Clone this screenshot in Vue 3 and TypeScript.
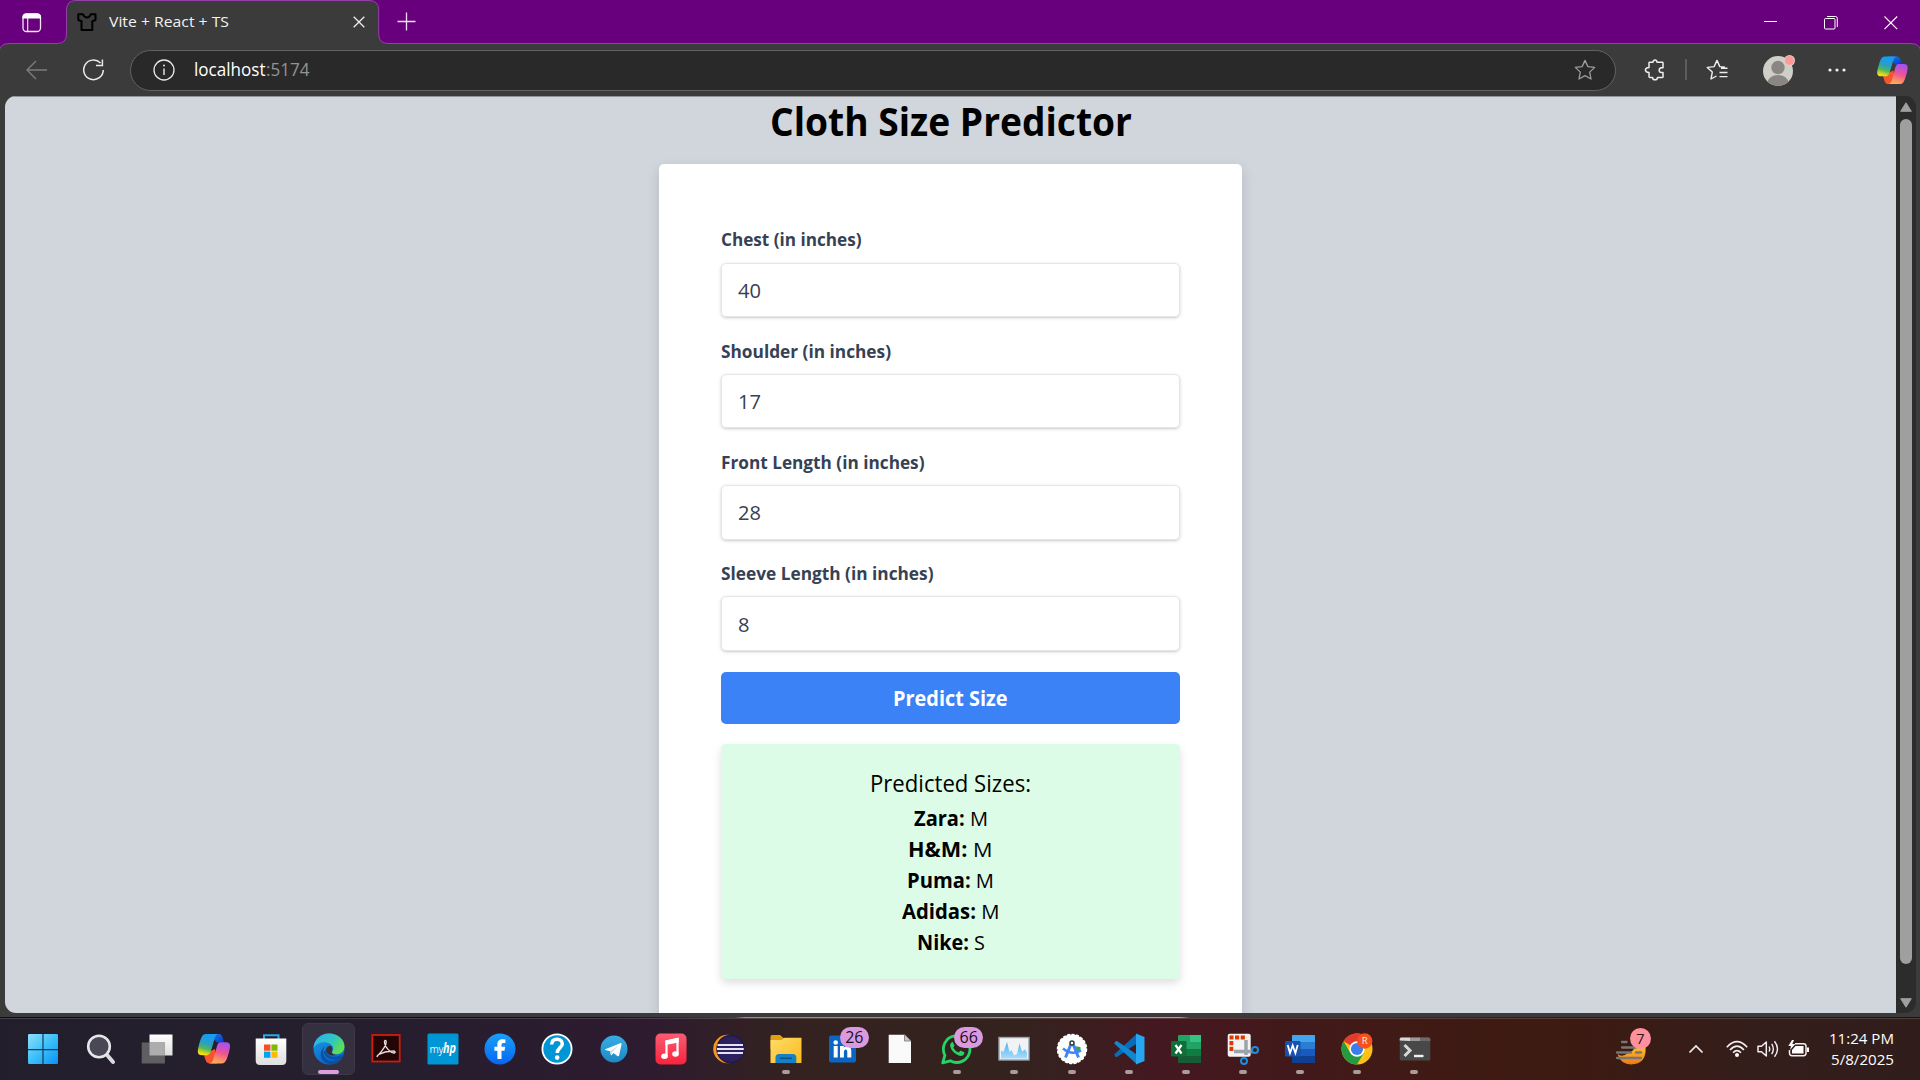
<script setup lang="ts">
import { ref } from 'vue'

interface Field { label: string; width: number; value: string; valueWidth: number }
interface Brand { name: string; size: string; width: number }
interface App { id: string; state?: 'active' | 'open'; badge?: string }

const fields = ref<Field[]>([
  { label: 'Chest (in inches)', width: 140.5, value: '40', valueWidth: 23 },
  { label: 'Shoulder (in inches)', width: 170, value: '17', valueWidth: 23 },
  { label: 'Front Length (in inches)', width: 203.5, value: '28', valueWidth: 23 },
  { label: 'Sleeve Length (in inches)', width: 212.5, value: '8', valueWidth: 11.5 },
])

const brands: Brand[] = [
  { name: 'Zara', size: 'M', width: 74 },
  { name: 'H&M', size: 'M', width: 84.5 },
  { name: 'Puma', size: 'M', width: 87 },
  { name: 'Adidas', size: 'M', width: 97.5 },
  { name: 'Nike', size: 'S', width: 68 },
]

const apps: App[] = [
  { id: 'start' }, { id: 'search' }, { id: 'taskview' }, { id: 'copilot' }, { id: 'store' },
  { id: 'edge', state: 'active' }, { id: 'acrobat' }, { id: 'myhp' }, { id: 'facebook' },
  { id: 'help' }, { id: 'telegram' }, { id: 'music' }, { id: 'eclipse' },
  { id: 'explorer', state: 'open' }, { id: 'linkedin', badge: '26' }, { id: 'file' },
  { id: 'whatsapp', state: 'open', badge: '66' }, { id: 'monitor', state: 'open' },
  { id: 'studio', state: 'open' }, { id: 'vscode', state: 'open' }, { id: 'excel', state: 'open' },
  { id: 'snip', state: 'open' }, { id: 'word', state: 'open' }, { id: 'chrome', state: 'open' },
  { id: 'terminal', state: 'open' },
]

// Condenses or widens a run of text so that it takes the given width.
const vFit = {
  mounted(el: HTMLElement, binding: { value: number }) {
    const w = el.getBoundingClientRect().width
    if (!w) return
    el.style.transform = `scaleX(${binding.value / w})`
    el.style.marginRight = `${binding.value - w}px`
  },
}
</script>

<template>
  <div class="desktop">
    <svg class="defs" width="0" height="0" aria-hidden="true">
      <defs>
        <linearGradient id="cpL" x1="0.6" y1="0" x2="0.3" y2="1">
          <stop offset="0.15" stop-color="#189cf0" /><stop offset="0.45" stop-color="#2a9fc0" />
          <stop offset="0.7" stop-color="#4cb860" /><stop offset="0.95" stop-color="#f4dc10" />
        </linearGradient>
        <linearGradient id="cpR" x1="0.7" y1="0" x2="0.4" y2="1">
          <stop offset="0.05" stop-color="#a850f0" /><stop offset="0.5" stop-color="#ee5590" />
          <stop offset="1" stop-color="#ffb052" />
        </linearGradient>
        <linearGradient id="cpT" x1="0" y1="0" x2="1" y2="1">
          <stop offset="0" stop-color="#1583ea" /><stop offset="1" stop-color="#0a35c4" />
        </linearGradient>
        <linearGradient id="win" x1="0" y1="0" x2="1" y2="1">
          <stop offset="0" stop-color="#8ee0fb" /><stop offset="0.5" stop-color="#3cc0fa" />
          <stop offset="1" stop-color="#0a92f5" />
        </linearGradient>
        <linearGradient id="edT" x1="0" y1="0" x2="1" y2="0.6">
          <stop offset="0.2" stop-color="#2fb4e4" /><stop offset="0.6" stop-color="#2fc8c0" />
          <stop offset="1" stop-color="#62e04c" />
        </linearGradient>
        <linearGradient id="edB" x1="0" y1="0" x2="0.4" y2="1">
          <stop offset="0" stop-color="#1c9ce4" /><stop offset="1" stop-color="#0a66cc" />
        </linearGradient>
        <linearGradient id="fold" x1="0" y1="0" x2="1" y2="1">
          <stop offset="0" stop-color="#ffdc6a" /><stop offset="1" stop-color="#fbb91c" />
        </linearGradient>
        <linearGradient id="mus" x1="0" y1="0" x2="0" y2="1">
          <stop offset="0" stop-color="#fb5c74" /><stop offset="1" stop-color="#fa233b" />
        </linearGradient>
        <linearGradient id="tg" x1="0" y1="0" x2="0" y2="1">
          <stop offset="0" stop-color="#37aee2" /><stop offset="1" stop-color="#1e88c4" />
        </linearGradient>
        <linearGradient id="fb" x1="0" y1="0" x2="0" y2="1">
          <stop offset="0" stop-color="#18a0fb" /><stop offset="1" stop-color="#0866f0" />
        </linearGradient>
        <linearGradient id="mon" x1="0" y1="0" x2="0" y2="1">
          <stop offset="0" stop-color="#4fb0ec" /><stop offset="1" stop-color="#a8dcfa" />
        </linearGradient>
        <linearGradient id="wht" x1="0" y1="0" x2="0" y2="1">
          <stop offset="0" stop-color="#ffffff" /><stop offset="1" stop-color="#dedede" />
        </linearGradient>
        <linearGradient id="sun" x1="0" y1="0" x2="0" y2="1">
          <stop offset="0" stop-color="#fbc02d" /><stop offset="1" stop-color="#f07818" />
        </linearGradient>
        <symbol id="copilot-logo" viewBox="-17 -17 34 34">
          <path d="M-5 -14.5H4.5C7.5 -14.5 8.3 -12 9.2 -8.5L9.8 -6H3Z" fill="url(#cpT)" />
          <path d="M-10 5L-8.3 10.5C-7.5 13 -6.5 14 -4 14H3L1 0Z" fill="#f8552e" />
          <path d="M-8 -14.5C-11.6 -14.2 -12.6 -11 -14.8 -3.2C-16.6 3 -16 6 -11.6 6H-7C-4 6 -3.4 3.6 -2.5 .6L.4 -9.4C1.6 -13 2.4 -14.5 5 -14.5Z" fill="url(#cpL)" />
          <path d="M11.6 -6.6H6.8C4 -6.6 3.4 -4.6 2.4 -1L-.4 9C-1.4 12.6 -2.4 14 -4.8 14H7.6C11.4 14 12.4 10.6 14.6 3C16.4 -3.4 16 -6.6 11.6 -6.6Z" fill="url(#cpR)" />
        </symbol>
      </defs>
    </svg>

    <div class="browser">
      <svg class="frame" width="1920" height="60" viewBox="0 0 1920 60">
        <rect width="1920" height="60" fill="#68007d" />
        <path d="M-1 64V52Q0 43.5 9 43.5H57Q66.5 43.5 66.5 34V10Q66.5 .5 76 .5H369Q378.700 .5 378.700 10V34Q378.700 43.500 388 43.500H1911Q1920 43.500 1921 52V64Z" fill="#3b3b3b" stroke="#9440a8" />
      </svg>

      <header class="tabs">
        <svg class="workspace" width="20" height="20" viewBox="0 0 20 20">
          <rect x="1" y="1" width="17.500" height="17.500" rx="3.500" fill="none" stroke="#f6eaf8" stroke-width="1.300" />
          <path d="M.5 5.500V4Q.5 .5 4 .5H15.500Q19 .5 19 4V5.500Z" fill="#fff" /><path d="M5.700 5V18" stroke="#f6eaf8" stroke-width="1.100" />
        </svg>
        <div class="tab">
          <svg width="20" height="20" viewBox="0 0 20 20">
            <path d="M1.300 2.300H6Q7.500 5.500 10 5.500T13.800 2.300H18.500V8L15.300 9.300V18H4.500V9.300L1.300 8Z" fill="none" stroke="#000" stroke-width="2" stroke-linejoin="round" />
          </svg>
          <span class="tab-title"><span v-fit="120" class="fit">Vite + React + TS</span></span>
          <svg width="12" height="12" viewBox="0 0 12 12"><path d="M.7 .7L11.300 11.300M11.300 .7L.7 11.300" stroke="#eee" stroke-width="1.300" /></svg>
        </div>
        <svg class="plus" width="19" height="19" viewBox="0 0 19 19"><path d="M9.500 .5V18.500M.5 9.500H18.500" stroke="#f0e0f4" stroke-width="1.300" /></svg>
        <div class="controls">
          <svg width="14" height="14" viewBox="0 0 14 14"><path d="M0 5.500H13" stroke="#fff" /></svg>
          <svg width="14" height="14" viewBox="0 0 14 14"><rect x=".5" y="2.500" width="10.500" height="10.500" rx="1" fill="none" stroke="#fff" /><path d="M3 .5H11.500Q13.300 .5 13.300 2.500V11" fill="none" stroke="#fff" /></svg>
          <svg width="14" height="14" viewBox="0 0 14 14"><path d="M.5 .5L13.200 13.200M13.200 .5L.5 13.200" stroke="#fff" stroke-width="1.100" /></svg>
        </div>
      </header>

      <div class="toolbar">
        <svg class="back" width="22" height="20" viewBox="0 0 22 20"><path d="M21 10H1M10 1L1 10L10 19" fill="none" stroke="#7d7d7d" stroke-width="1.400" /></svg>
        <svg class="reload" width="23" height="24" viewBox="0 0 23 24"><path d="M18.500 5A9.800 9.800 0 1 0 21.300 12M20.400 1.500V7.500H14" fill="none" stroke="#ececec" stroke-width="1.500" /></svg>
        <div class="address">
          <svg width="22" height="22" viewBox="0 0 22 22"><circle cx="11" cy="11" r="10" fill="none" stroke="#e8e8e8" stroke-width="1.300" /><path d="M11 9.500V16" stroke="#e8e8e8" stroke-width="1.400" /><circle cx="11" cy="6.500" r="1" fill="#e8e8e8" /></svg>
          <span class="url"><span v-fit="71.500" class="fit host">localhost</span><span v-fit="43.500" class="fit port">:5174</span></span>
          <svg class="fav" width="22" height="22" viewBox="0 0 22 22"><path d="M11 1.400L13.900 7.600L20.700 8.400L15.700 13.100L17 20L11 16.600L5 20L6.300 13.100L1.300 8.400L8.100 7.600Z" fill="none" stroke="#9c9c9c" stroke-width="1.300" stroke-linejoin="round" /></svg>
        </div>
        <svg class="ext" width="22" height="22" viewBox="0 0 22 22"><path d="M5.500 3.300H9Q9.200 1 11 1T13 3.300H18.300Q19 3.300 19 4V8.800H17.500Q15.200 9 15.200 11.200T17.500 13.500H19V17.800Q19 18.600 18.200 18.600H13.500Q13.200 20.800 11 20.800T8.600 18.600H6Q5 18.600 5 17.600V13.500Q1.400 13.300 1.400 11T5 8.500V4Q5 3.300 5.500 3.300Z" fill="none" stroke="#eee" stroke-width="1.500" stroke-linejoin="round" /></svg>
        <i class="divider" />
        <svg class="favs" width="22" height="22" viewBox="0 0 22 22"><path d="M19 8.300L13.800 7.600L11 1.400L8.100 7.600L1.300 8.400L6.300 13.100L5 20L10.500 17M15 9.200H21.500M13.500 13.500H21.500M13.500 17.600H21.500" fill="none" stroke="#eee" stroke-width="1.400" stroke-linejoin="round" /></svg>
        <svg class="avatar" width="34" height="34" viewBox="0 0 34 34">
          <clipPath id="av"><circle cx="16" cy="18" r="15" /></clipPath>
          <circle cx="16" cy="18" r="15" fill="#d0cec9" />
          <g clip-path="url(#av)" fill="#8a8682"><circle cx="16" cy="14.500" r="6.700" /><ellipse cx="16" cy="30" rx="10.500" ry="8" /></g>
          <circle cx="27.500" cy="7.500" r="5.500" fill="#d9d0cc" /><circle cx="27.500" cy="7.500" r="4.600" fill="#ff9a96" />
        </svg>
        <svg class="dots" width="18" height="4" viewBox="0 0 18 4"><g fill="#f0f0f0"><circle cx="2" cy="2" r="1.600" /><circle cx="9" cy="2" r="1.600" /><circle cx="16" cy="2" r="1.600" /></g></svg>
        <svg class="cop" width="33" height="33"><use href="#copilot-logo" /></svg>
      </div>

      <div class="viewport">
        <main class="page">
          <h1><span v-fit="362" class="fit">Cloth Size Predictor</span></h1>
          <form class="card" @submit.prevent>
            <div v-for="f in fields" :key="f.label" class="field">
              <label><span v-fit="f.width" class="fit">{{ f.label }}</span></label>
              <div class="input"><span v-fit="f.valueWidth" class="fit">{{ f.value }}</span></div>
            </div>
            <button type="button"><span v-fit="114.500" class="fit">Predict Size</span></button>
            <section class="result">
              <h2><span v-fit="161" class="fit">Predicted Sizes:</span></h2>
              <p v-for="b in brands" :key="b.name"><span v-fit="b.width" class="fit"><strong>{{ b.name }}:</strong> {{ b.size }}</span></p>
            </section>
          </form>
        </main>
        <div class="scrollbar">
          <svg width="12" height="10" viewBox="0 0 12 10"><path d="M6 .8L11.300 9.300H.7Z" fill="#a0a0a0" stroke="#a0a0a0" stroke-linejoin="round" /></svg>
          <div class="thumb" />
          <svg width="12" height="10" viewBox="0 0 12 10"><path d="M6 9.200L11.300 .7H.7Z" fill="#a0a0a0" stroke="#a0a0a0" stroke-linejoin="round" /></svg>
        </div>
      </div>
    </div>

    <footer class="taskbar">
      <div class="apps">
        <div v-for="a in apps" :key="a.id" class="app" :class="a.state">
          <svg width="40" height="40" viewBox="-20 -20 40 40">
            <g v-if="a.id === 'start'"><rect x="-15" y="-15" width="30" height="30" rx="1.200" fill="url(#win)" /><path d="M0 -15V15M-15 .6H15" stroke="#1c3a58" stroke-width="1.200" /></g>
            <g v-else-if="a.id === 'search'"><path d="M7.500 6.500L13 13" stroke="#d8dce0" stroke-width="4" stroke-linecap="round" /><circle cx="-1" cy="-2.500" r="10.800" fill="#4a4854" stroke="#e4e8ea" stroke-width="2.600" /></g>
            <g v-else-if="a.id === 'taskview'"><rect x="-7.500" y="-14.500" width="23" height="21" fill="url(#wht)" /><rect x="-15.300" y="-6.500" width="23.200" height="21" fill="#5f5f62" /><rect x="-7.500" y="-6.500" width="15.400" height="13" fill="#adadad" /></g>
            <use v-else-if="a.id === 'copilot'" href="#copilot-logo" x="-17.500" y="-17.500" width="35" height="35" />
            <g v-else-if="a.id === 'store'"><path d="M-7 -10V-13.800H7.500V-10" fill="none" stroke="#2aaae8" stroke-width="2" /><path d="M-15.300 -10.500H15.300V11.500Q15.300 16 11 16H-11Q-15.300 16 -15.300 11.500Z" fill="url(#wht)" /><path d="M-7 -4.500H-.6V1.700H-7Z" fill="#f25022" /><path d="M.4 -4.500H6.500V1.700H.4Z" fill="#7fba00" /><path d="M-7 2.600H-.6V8.800H-7Z" fill="#00a4ef" /><path d="M.4 2.600H6.500V8.800H.4Z" fill="#ffb900" /></g>
            <g v-else-if="a.id === 'edge'">
              <circle cx="0" cy="0" r="15.500" fill="url(#edB)" />
              <path d="M-6 1.500C-6 11 2 15.500 13.500 8.500C10 15 3 16.500 -2 14.500C-9 11.500 -11 2 -4 -2.500Z" fill="#0c50a0" />
              <path d="M-15.500 -1C-15 -10 -8 -15.500 0 -15.500C9 -15.500 15.500 -9.500 15.500 -2.500C15.500 3 11 5.500 7 5.300C3.500 5 2 4 3 2.500C5 0 4.500 -3 1.500 -5C-4 -8.500 -12 -7 -15.500 -1Z" fill="url(#edT)" />
              <path d="M-3 1C-3 7.500 4 10 14.500 5.500C15.500 5.200 14.800 7 14 8C8 13 -4 11 -5.500 2.500Z" fill="#0c50a0" /><path d="M-3 0Q-1 -4 2 -3Q4.500 0 2.800 3Q2.500 5 7 6Q-3 8 -3 0Z" fill="#34303f" />
            </g>
            <g v-else-if="a.id === 'acrobat'"><rect x="-13.700" y="-14" width="27.400" height="26.500" fill="#240505" stroke="#d01c0c" stroke-width="1.800" /><path d="M-8.200 6.500C-5 3 .2 -2.500 .2 -6.800C.2 -9.600 -2 -9 -1.500 -6.200C-.8 -1.500 4.500 3.800 8 4C10 4 9.500 1.800 6.500 2C2 2.200 -4 3.800 -7.200 5.500C-9.500 7 -9.200 8.500 -8.200 6.500Z" fill="none" stroke="#e8dede" stroke-width="1.300" /></g>
            <g v-else-if="a.id === 'myhp'"><rect x="-15.500" y="-15.500" width="31" height="31" rx="1.500" fill="#0096d6" /><text x="-13.500" y="3.800" class="svgt" font-size="10" fill="#e6f5fb" textLength="14">my</text><text x="0" y="4" class="svgt" font-size="15" font-weight="700" font-style="italic" fill="#fff" textLength="13" lengthAdjust="spacingAndGlyphs">hp</text></g>
            <g v-else-if="a.id === 'facebook'"><circle r="15.500" fill="url(#fb)" /><path d="M-2.600 10V1.800H-5.600V-2.200H-2.600V-4.600C-2.600 -8.200 -.6 -9.800 2.600 -9.800Q4.500 -9.800 5.400 -9.500V-5.900H3.400C1.800 -5.900 1.500 -5 1.500 -4V-2.200H5.200L4.500 1.800H1.500V10Z" fill="#fff" /></g>
            <g v-else-if="a.id === 'help'"><circle r="14.600" fill="#0096d6" stroke="#fff" stroke-width="1.800" /><path d="M-5.300 -4.500C-5.300 -8.500 -2.500 -9.700 .2 -9.700C3.200 -9.700 5.300 -8 5.300 -5C5.300 -1.500 .2 -1 .2 4" fill="none" stroke="#fff" stroke-width="3.500" /><circle cx=".2" cy="8.600" r="2.300" fill="#fff" /></g>
            <g v-else-if="a.id === 'telegram'"><circle r="13.500" fill="url(#tg)" /><path d="M-8.800 .2L6.800 -5.900Q7.800 -6 7.500 -4.500L5 6.700Q4.600 7.800 3.400 7L-.5 4.100L-2.500 6.200Q-3.200 6.600 -3.300 5.500L-3.900 2.200L-8.600 .9Q-9.300 .6 -8.800 .2Z" fill="#fff" /><path d="M-3.900 2.200L4.500 -3.200L-2.200 3.200L-2.700 5.900Z" fill="#b8dcf0" /></g>
            <g v-else-if="a.id === 'music'"><rect x="-15.500" y="-15.500" width="31" height="31" rx="5" fill="url(#mus)" /><path d="M-4.500 7V-7.500L6.500 -10V4.500" fill="none" stroke="#fff" stroke-width="2.200" /><path d="M-5.500 -8.500L7.600 -11V-6.500L-5.500 -4Z" fill="#fff" /><ellipse cx="-6.500" cy="7.300" rx="3.300" ry="2.700" fill="#fff" /><ellipse cx="4.500" cy="5" rx="3.300" ry="2.700" fill="#fff" /></g>
            <g v-else-if="a.id === 'eclipse'"><circle cx="-1.500" r="14.300" fill="#f59a20" /><circle cx="1.600" r="13.600" fill="#2c2060" stroke="#241c40" stroke-width="1.500" /><path d="M-11.500 -4H14M-12 0H14.800M-11.500 4H14" stroke="#e4e2f0" stroke-width="1.900" /></g>
            <g v-else-if="a.id === 'explorer'"><path d="M-15.500 -12.500Q-15.500 -14 -14 -14H-6L-2.500 -11H15V0H-15.500Z" fill="#e0a010" /><path d="M-15.500 -9H-4.500L-1.500 -11.200H15.500V14H-15.500Z" fill="url(#fold)" /><path d="M-10.500 14V8.500Q-10.500 5 -7 5H7Q10.300 5 10.300 8.500V14Z" fill="#1680c4" /><path d="M-6 9.300H6" stroke="#0c5088" stroke-width="1.500" /></g>
            <g v-else-if="a.id === 'linkedin'"><rect x="-14" y="-13.500" width="27" height="27" rx="2" fill="#0a66c2" /><circle cx="-7.300" cy="-6.500" r="2.300" fill="#fff" /><path d="M-9.300 -3H-5.300V8.500H-9.300ZM-3 -3H.8V-1.500C2 -3.300 8.300 -4.200 8.300 2V8.500H4.300V3C4.300 -.5 .9 -.3 .9 3V8.500H-3Z" fill="#fff" /></g>
            <g v-else-if="a.id === 'file'"><path d="M-11.300 -14.300H5L11 -8.300V14H-11.300Z" fill="#fafafa" /><path d="M4.500 -14.300V-8H11Z" fill="#c8c8c8" stroke="#7a7472" stroke-width=".8" /></g>
            <g v-else-if="a.id === 'whatsapp'"><path d="M-14.300 13.800L-12.100 6.300A13.300 13.300 0 1 1 -6.700 11.800Z" fill="none" stroke="#25d366" stroke-width="2.800" stroke-linejoin="round" /><path d="M-5.300 -6.800Q-7.500 -5 -6.800 -2.500C-5.300 2.500 -1 6 3.600 7Q6.500 7 7.300 4.500V3.200L3.500 1.500L1.700 3.600Q-2 2 -3.700 -1.300L-2.500 -3.200L-4.200 -7Z" fill="#25d366" /></g>
            <g v-else-if="a.id === 'monitor'"><rect x="-15" y="-11.500" width="30" height="22.500" fill="#f0f2f4" stroke="#9aa2ac" stroke-width="1.400" /><path d="M-13 9.500V1.500L-10.500 3L-7 -7L-4.500 3L-2.500 1L0 6.500L3 5L5.500 -5.500L8 2.500L11 .5L13 3.500V9.500Z" fill="url(#mon)" /></g>
            <g v-else-if="a.id === 'studio'"><circle r="14.500" fill="#fff" stroke="#fff" stroke-width="1.500" stroke-dasharray="3 1.500" /><path d="M2 -3L8.500 -2V2.500L4 3Z" fill="#34a853" /><path d="M-1 -5L-6.500 8.500M1 -5L6.500 8.500" stroke="#4285f4" stroke-width="3" /><path d="M-9 -.5Q0 7 9 1.500" fill="none" stroke="#4285f4" stroke-width="2.500" /><circle cy="-6" r="2" fill="#fff" stroke="#303a44" stroke-width="1.500" /></g>
            <g v-else-if="a.id === 'vscode'"><path d="M-14.800 5.500L7 -14.500V-5L-12 8Q-13 8.300 -13.700 7.500Z" fill="#0a6cb4" /><path d="M-14.800 -5.500L7 14.500V5L-12 -8Q-13 -8.300 -13.700 -7.500Z" fill="#1286d0" /><path d="M7 -15.500L15.500 -12V12L7 15.500Z" fill="#28a6f2" /></g>
            <g v-else-if="a.id === 'excel'"><rect x="-8" y="-14" width="23" height="28" rx="1.200" fill="#21a366" /><path d="M4 -14H15V-7H4Z" fill="#33c481" /><path d="M-8 0H4V7H-8Z" fill="#107c41" /><path d="M4 0H15V7H4Z" fill="#107c41" /><path d="M-8 7H15V14H-8Z" fill="#185c37" /><rect x="-15" y="-8" width="15.500" height="15.500" rx="1.200" fill="#0f6e3a" /><path d="M-10.500 -4L-4.500 4.500M-4.500 -4L-10.500 4.500" stroke="#fff" stroke-width="2.200" /></g>
            <g v-else-if="a.id === 'snip'"><rect x="-15.300" y="-15.300" width="23" height="23" rx="2" fill="#f4f2f2" /><path d="M-11.600 2V-11.500H3.500" fill="none" stroke="#d83b01" stroke-width="3.800" stroke-dasharray="4.200 1.500" /><path d="M3 -9V6M-9 2.500H10" stroke="#9aa4aa" stroke-width="3.500" /><circle cx="1" cy="12" r="3" fill="none" stroke="#1890e0" stroke-width="2" /><circle cx="12" cy="1" r="3" fill="none" stroke="#1890e0" stroke-width="2" /></g>
            <g v-else-if="a.id === 'word'"><rect x="-8" y="-14" width="23" height="28" rx="1.200" fill="#2b7cd3" /><path d="M-8 -13Q-8 -14 -7 -14H14Q15 -14 15 -13V-7H-8Z" fill="#41a5ee" /><path d="M-8 0H15V7H-8Z" fill="#185abd" /><path d="M-8 7H15V14H-8Z" fill="#103f91" /><rect x="-15" y="-8" width="15.500" height="15.500" rx="1.200" fill="#1752b0" /><path d="M-12.300 -4L-10 4L-7.300 -3.500L-4.600 4L-2.300 -4" fill="none" stroke="#fff" stroke-width="1.800" /></g>
            <g v-else-if="a.id === 'chrome'"><circle r="15.500" fill="#fbc116" /><path d="M0 0L-13.420 -7.750A15.500 15.500 0 0 1 13.420 -7.750L0 -7.700Z" fill="#e33b2e" /><path d="M-13.420 -7.750A15.500 15.500 0 0 0 0 15.500L6.700 3.900L0 0L-6.700 3.900Z" fill="#249a41" /><circle r="7.700" fill="#fff" /><circle r="6.100" fill="#3b7ded" /><circle cx="7.700" cy="-8" r="7.700" fill="#f4511e" /><text x="7.700" y="-4.700" text-anchor="middle" class="svgt" font-size="9.500" fill="#ffe8e0">R</text></g>
            <g v-else-if="a.id === 'terminal'"><rect x="-15.300" y="-11.500" width="30.600" height="23" rx="1.500" fill="#484848" /><path d="M-15.300 -8.500V-10Q-15.300 -11.500 -13.800 -11.500H-5V-8Z" fill="#d8d8d8" /><path d="M-5 -11.500H5V-8H-5Z" fill="#9a9a9a" /><path d="M5 -11.500H13.800Q15.300 -11.500 15.300 -10V-8H5Z" fill="#6a6a6a" /><path d="M-10.500 -4L-5 1.500L-10.500 7" fill="none" stroke="#d8d8d8" stroke-width="3" /><path d="M-1 7H8.500" stroke="#f0f0f0" stroke-width="2.400" /></g>
          </svg>
          <b v-if="a.badge" class="badge">{{ a.badge }}</b>
        </div>
      </div>

      <div class="tray">
        <svg class="weather" width="38" height="40" viewBox="0 0 38 40">
          <path d="M3.500 26Q8 30 14 25Q19 24 21 19H31.500Q33 36 17 36.500Q7 36.500 3.500 26Z" fill="url(#sun)" />
          <path d="M8 14H12.500M8 19.500H22M3 24.500H17M22 24.500H27M3 30H27" stroke="#7a7672" stroke-width="2.300" stroke-linecap="round" />
          <circle cx="26.500" cy="10.500" r="10.500" fill="#ff909e" /><text x="26.500" y="16" text-anchor="middle" class="svgt" font-size="14.500" fill="#301418">7</text>
        </svg>
        <svg class="chev" width="16" height="10" viewBox="0 0 16 10"><path d="M1.500 8.500L8 2L14.500 8.500" fill="none" stroke="#f2eeee" stroke-width="1.700" /></svg>
        <svg class="wifi" width="22" height="18" viewBox="0 0 22 18"><g fill="none" stroke="#f2eeee" stroke-width="1.600"><path d="M.8 7.200Q11 -4 21.200 7.200M4 10Q11 2.300 18 10M7 12.800Q11 8.500 15 12.800" /></g><circle cx="11" cy="15" r="2" fill="#fff" /></svg>
        <svg class="sound" width="22" height="18" viewBox="0 0 22 18"><path d="M1 6.300H4.500L9.300 2V16L4.500 11.700H1Z" fill="none" stroke="#f2eeee" stroke-width="1.500" stroke-linejoin="round" /><path d="M12 6.500Q13.500 9 12 11.500M14.700 3.800Q18 9 14.700 14.200M17.500 1.300Q23.500 9 17.500 16.700" fill="none" stroke="#f2eeee" stroke-width="1.400" /></svg>
        <svg class="power" width="22" height="18" viewBox="0 0 22 18"><path d="M7 3.700H15.500Q18 3.700 18 6V13Q18 15.700 15.500 15.700H4Q1.500 15.700 1.500 13V10" fill="none" stroke="#f2eeee" stroke-width="1.500" /><path d="M7.500 6H15.500V13.500H4V10Z" fill="#fff" /><path d="M19 7.500H21V12H19Z" fill="#fff" /><path d="M4 0L.3 6H3L2 10L7.300 4H4.300L6 0Z" fill="#fff" /></svg>
        <div class="clock"><div><span v-fit="65" class="fit">11:24 PM</span></div><div><span v-fit="63" class="fit">5/8/2025</span></div></div>
      </div>
    </footer>
  </div>
</template>

<style>
html, body { margin: 0; overflow: hidden; background: #3b3b3b; }
</style>

<style scoped>
.desktop {
  width: 1920px;
  height: 1080px;
  display: flex;
  flex-direction: column;
  overflow: hidden;
  font-family: "Open Sans", "Noto Sans", sans-serif;
  box-sizing: border-box;
}
.desktop *, .desktop *::before, .desktop *::after { box-sizing: border-box; }
.defs { position: absolute; }
svg { flex: none; display: block; }
.fit { display: inline-block; white-space: nowrap; transform-origin: left center; }

.browser { position: relative; height: 1017px; flex: none; display: flex; flex-direction: column; background: #3b3b3b; }
.frame { position: absolute; left: 0; top: 0; }
.tabs { position: relative; height: 43px; flex: none; display: flex; align-items: center; }
.workspace { margin: 2px 0 0 22px; }
.tab { width: 312px; height: 43px; margin-left: 25px; padding: 0 14px 0 9.500px; display: flex; align-items: center; }
.tab-title { flex: 1; margin-left: 12px; font-size: 14.500px; line-height: 22px; color: #f2f2f2; }
.plus { margin-left: 18px; }
.controls { margin-left: auto; margin-right: 22.500px; margin-top: 2px; display: flex; gap: 46px; }

.toolbar { position: relative; height: 53px; flex: none; display: flex; align-items: center; }
.back { margin-left: 26px; }
.reload { margin-left: 34px; }
.address {
  width: 1486px; height: 41px; margin: 1px 0 0 25px; padding: 0 19px 0 22px;
  display: flex; align-items: center; border: 1px solid #636363; border-radius: 21px; background: #292929;
}
.url { margin: -2px 0 0 19px; font-size: 18px; line-height: 24px; white-space: nowrap; }
.host { color: #fff; }
.port { color: #949494; }
.fav { margin-left: auto; }
.ext { margin-left: 28px; }
.divider { width: 2px; height: 21px; margin-left: 19px; background: #5d5d5d; }
.favs { margin-left: 19px; }
.avatar { margin-left: 34px; }
.dots { margin-left: 32px; }
.cop { margin: 2px 0 0 30px; }

.viewport { height: 917px; flex: none; margin: 0 4px 0 5px; display: flex; border-radius: 11px; overflow: hidden; }
.page {
  flex: 1; overflow: hidden; background: #d1d5dc; border-top: 1px solid #94959a;
  display: flex; flex-direction: column; align-items: center;
}
h1 { margin: 0; font-size: 39px; line-height: 48px; font-weight: 700; color: #000; }
.card {
  width: 583px; flex: none; height: 900px; margin-top: 19px; padding: 63.400px 62px; background: #fff;
  border-radius: 5px; box-shadow: 0 5px 14px rgba(0, 0, 0, 0.13);
  display: flex; flex-direction: column;
}
.field { margin-bottom: 21.400px; flex: none; }
label { display: block; font-size: 17.500px; line-height: 24px; font-weight: 700; color: #364153; }
.input {
  height: 54.300px; margin-top: 11.500px; padding: 0 16px; display: flex; align-items: center;
  border: 1px solid #e5e6e8; border-radius: 5px; font-size: 20.500px; color: #364153;
  box-shadow: 0 1px 4px rgba(0, 0, 0, 0.1), 0 1px 2px rgba(0, 0, 0, 0.12);
}
button {
  height: 52px; flex: none; border: 0; border-radius: 5px; background: #3b82f6; color: #fff;
  font: 700 20.500px/26px "Open Sans", "Noto Sans", sans-serif;
}
.result {
  height: 235px; flex: none; margin-top: 20px; padding-top: 23px; border-radius: 5px; background: #dcfce7;
  text-align: center; color: #000; box-shadow: 0 4px 8px rgba(0, 0, 0, 0.13);
}
h2 { margin: 0 0 1.500px; font-size: 22.800px; line-height: 34px; font-weight: 400; }
p { margin: 0; font-size: 20.500px; line-height: 31.200px; }

.scrollbar { width: 20px; padding: 6px 4px 5px; background: #2c2c2c; display: flex; flex-direction: column; }
.thumb { height: 845px; margin: 7px 0 auto; border-radius: 6px; background: #9f9f9f; }

.taskbar {
  height: 63px; flex: none; display: flex; justify-content: space-between; position: relative;
  border-top: 1px solid #10060f;
  background: linear-gradient(90deg, #231e2c 0, #251e2e 380px, #2e1b30 640px, #33221f 800px, #35221f 1030px, #441820 1160px, #401a16 1400px, #3d1a12 1560px, #341e1b 1760px, #301d1b 1920px);
}
.taskbar::before {
  content: ""; position: absolute; left: 0; right: 0; top: -1px; height: 1px;
  background: linear-gradient(90deg, #0e0a16 0, #150c1c 600px, #4a3448 735px, #a08f70 745px, #9d8890 900px, #a88fa8 1020px, #b0a080 1180px, #6d2530 1190px, #4a1418 1500px, #2a0d0a 1920px);
}
.taskbar::after {
  content: ""; position: absolute; left: 0; right: 0; top: 0; height: 1px; background: rgba(255, 255, 255, 0.15);
}
.apps { display: flex; padding-left: 14.200px; }
.app { width: 57.170px; height: 62px; position: relative; display: flex; align-items: center; justify-content: center; }
.app svg { position: relative; }
.app.active::before {
  content: ""; position: absolute; left: 2px; top: 5px; width: 53px; height: 52px; border-radius: 6px;
  background: #34303f; border: 1px solid #3c3847;
}
.app.active::after, .app.open::after { content: ""; position: absolute; left: 24.500px; bottom: 6px; width: 8px; height: 4px; border-radius: 2px; background: #aa9c9c; }
.app.active::after { left: 18px; width: 21px; background: #dd9fe0; }
.badge {
  position: absolute; left: 25.500px; top: 9px; width: 29px; height: 21px; border-radius: 11px;
  background: #d99ae0; color: #1c101e; font-size: 16px; font-weight: 400; line-height: 20px; text-align: center;
}
.svgt { font-family: "Open Sans", "Noto Sans", sans-serif; }
.tray { display: flex; align-items: center; padding-right: 26px; }
.weather { margin-top: -3px; }
.chev { margin-left: 35.500px; }
.wifi { margin-left: 22px; }
.sound { margin-left: 9px; }
.power { margin-left: 9px; }
.clock { margin: -1px 0 0 19.500px; font-size: 14.800px; line-height: 20.700px; color: #fff; text-align: right; }
</style>
